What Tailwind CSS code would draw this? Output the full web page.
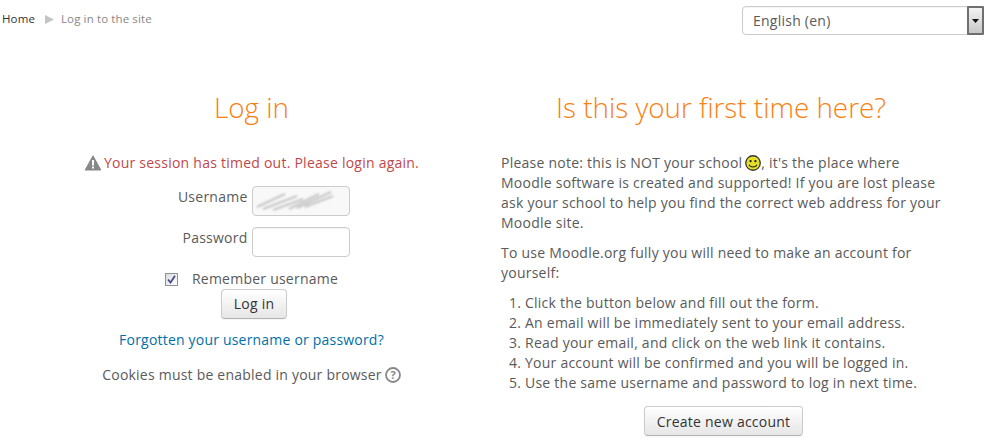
<!DOCTYPE html>
<html lang="en"><head><meta charset="utf-8"><title>Log in</title>
<script src="https://cdn.jsdelivr.net/npm/@tailwindcss/browser@4"></script></head>
<body class="bg-white w-[986px] h-[442px] overflow-hidden font-['Open_Sans',sans-serif] text-[14px] leading-[20px] tracking-[0.24px] text-[#5a5a5a]">
<header class="flex justify-between items-start h-[60px]">
  <nav class="flex items-center pl-[2px] pt-[9px] text-[11.5px] leading-[20px] tracking-[0.12px]">
    <span class="text-[#333]">Home</span>
    <svg class="ml-[10px] mr-[7px]" width="9" height="9" viewBox="0 0 9 9"><path d="M0 0L9 4.5L0 9Z" fill="#c4c4c4"/></svg>
    <span class="text-[#888]">Log in to the site</span>
  </nav>
  <div class="mt-[6px] mr-[2px] w-[242px] h-[29px] border border-[#ccc] rounded-[4px] flex items-stretch justify-between bg-white shadow-[inset_0_1px_1px_rgba(0,0,0,0.05)]">
    <span class="pl-[10px] pt-[4px]">English (en)</span>
    <span class="w-[17px] -my-px -mr-px border-2 border-[#6f6f6f] rounded-[1px] bg-gradient-to-b from-[#f4f4f4] to-[#c8c8c8] flex items-center justify-center">
      <svg width="7" height="4" viewBox="0 0 7 4"><path d="M0 0H7L3.5 4Z" fill="#111"/></svg>
    </span>
  </div>
</header>
<main class="flex">
  <section class="w-[501px] flex flex-col items-center">
    <h2 class="text-[27.8px] leading-[40px] tracking-normal font-light text-[#f98012] mt-[27px] mb-[26px] ml-[2px]">Log in</h2>
    <p class="flex items-center text-[#c0484b] h-[20px] ml-[3px]">
      <svg class="mr-[3px]" width="16" height="16" viewBox="0 0 16 16"><path d="M8 .8L15.8 15H.2Z" fill="#888" stroke="#888" stroke-linejoin="round"/><rect x="7" y="5" width="2" height="5.5" fill="#fff"/><rect x="7" y="11.5" width="2" height="2" fill="#fff"/></svg>
      Your session has timed out. Please login again.
    </p>
    <div class="mt-[13px] flex items-center gap-[4px] ml-[3px]">
      <label class="w-[93px] text-right -mt-[9px]">Username</label>
      <div class="w-[98px] h-[30px] border border-[#ccc] rounded-[4px] bg-[#f8f8f8] overflow-hidden">
        <svg class="blur-[1.2px]" width="96" height="28" viewBox="0 0 96 28"><g stroke="#b5b5b5" stroke-width="1.6"><path d="M4 20L32 7M10 22L44 9M20 23L50 12M36 22L66 7M44 21L78 5M52 20L80 9"/></g></svg>
      </div>
    </div>
    <div class="mt-[11px] flex items-center gap-[4px] ml-[3px]">
      <label class="w-[93px] text-right -mt-[9px]">Password</label>
      <div class="w-[98px] h-[30px] border border-[#ccc] rounded-[4px] bg-white shadow-[inset_0_1px_1px_rgba(0,0,0,0.05)]"></div>
    </div>
    <div class="mt-[12px] flex items-center gap-[14px] ml-[2px] h-[20px]">
      <span class="w-[13px] h-[13px] border border-[#8f8f9d] bg-gradient-to-br from-[#dcdcdc] to-[#fff] flex items-center justify-center">
        <svg width="9" height="9" viewBox="0 0 9 9"><path d="M1 4.5L3.5 7.5L8 .8" fill="none" stroke="#3f4a8a" stroke-width="1.7"/></svg>
      </span>
      <span>Remember username</span>
    </div>
    <button class="ml-[7px] w-[66px] h-[30px] border border-[#ccc] border-b-[#b3b3b3] rounded-[4px] bg-gradient-to-b from-white to-[#e6e6e6] text-[#333] shadow-[0_1px_2px_rgba(0,0,0,0.05)]">Log in</button>
    <a class="mt-[11px] ml-[2px] tracking-[0.2px] text-[#0070a8]">Forgotten your username or password?</a>
    <p class="mt-[15px] ml-[2px] tracking-[0.22px] flex items-center">Cookies must be enabled in your browser
      <svg class="ml-[3px]" width="16" height="16" viewBox="0 0 16 16"><circle cx="8" cy="8" r="7" fill="#fff" stroke="#888" stroke-width="1.8"/><text x="8" y="12" text-anchor="middle" font-size="11" font-weight="700" letter-spacing="0" fill="#888">?</text></svg>
    </p>
  </section>
  <section class="w-[440px] flex flex-col">
    <h2 class="text-[27.8px] leading-[40px] tracking-normal font-light text-[#f98012] text-center mt-[27px] mb-[26px] whitespace-nowrap">Is this your first time here?</h2>
    <p class="mb-[10px]">Please note: this is NOT your school <svg class="inline-block align-[-3px] -ml-px" width="16" height="16" viewBox="0 0 15 15"><circle cx="7.5" cy="7.5" r="6.8" fill="#e7e02b" stroke="#333" stroke-width="1.2"/><circle cx="5.2" cy="5.7" r="1.1" fill="#222"/><circle cx="9.8" cy="5.7" r="1.1" fill="#222"/><path d="M3.8 9C5 12 10 12 11.2 9" fill="none" stroke="#222"/></svg>, it's the place where Moodle software is created and supported! If you are lost please ask your school to help you find the correct web address for your Moodle site.</p>
    <p class="mb-[10px]">To use Moodle.org fully you will need to make an account for yourself:</p>
    <ol class="list-decimal pl-[24px] mb-[12px]">
      <li>Click the button below and fill out the form.</li>
      <li>An email will be immediately sent to your email address.</li>
      <li>Read your email, and click on the web link it contains.</li>
      <li>Your account will be confirmed and you will be logged in.</li>
      <li>Use the same username and password to log in next time.</li>
    </ol>
    <button class="self-center mt-[1px] ml-[5px] w-[159px] h-[30px] pt-[2px] border border-[#ccc] border-b-[#b3b3b3] rounded-[4px] bg-gradient-to-b from-white to-[#e6e6e6] text-[#333] shadow-[0_1px_2px_rgba(0,0,0,0.05)]">Create new account</button>
  </section>
</main>
</body></html>
